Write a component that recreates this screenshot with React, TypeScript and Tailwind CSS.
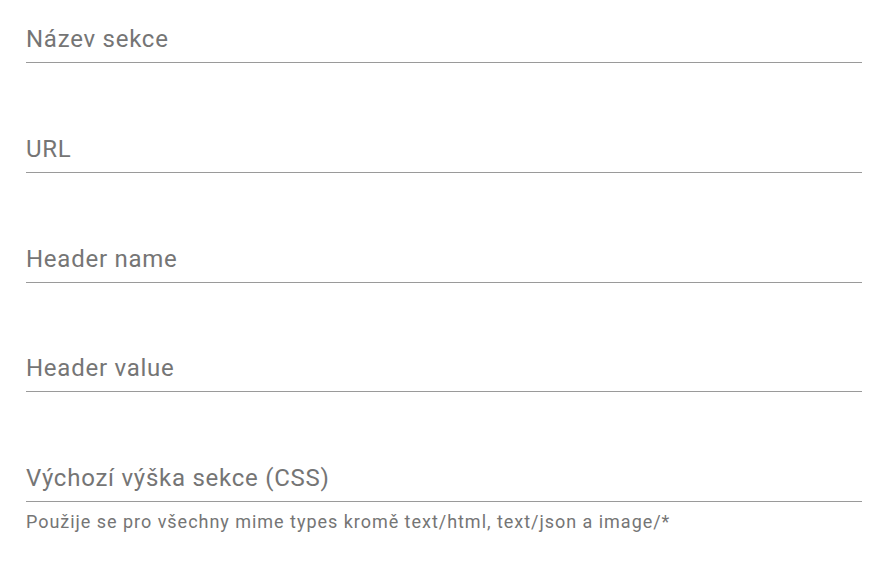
import React from 'react';

interface FieldProps {
  label: string;
  helper?: string;
}

function Field({ label, helper }: FieldProps) {
  return (
    <div className="flex flex-col">
      <div className="border-b-[1.5px] border-[#9a9a9a] pb-[11px]">
        <span className="block text-[24px] leading-[24px] tracking-[0.75px] text-[#757575]">{label}</span>
      </div>
      {helper && (
        <p className="mt-[5px] text-[18px] leading-[30px] tracking-[0.97px] text-[#757575]">{helper}</p>
      )}
    </div>
  );
}

export default function App() {
  return (
    <div className="min-h-[562px] w-[892px] bg-white pl-[26px] pr-[30px] pt-[27px] font-['Roboto',sans-serif]">
      <div className="flex flex-col gap-[73.8px]">
        <Field label="Název sekce" />
        <Field label="URL" />
        <Field label="Header name" />
        <Field label="Header value" />
        <Field
          label="Výchozí výška sekce (CSS)"
          helper="Použije se pro všechny mime types kromě text/html, text/json a image/*"
        />
      </div>
    </div>
  );
}
